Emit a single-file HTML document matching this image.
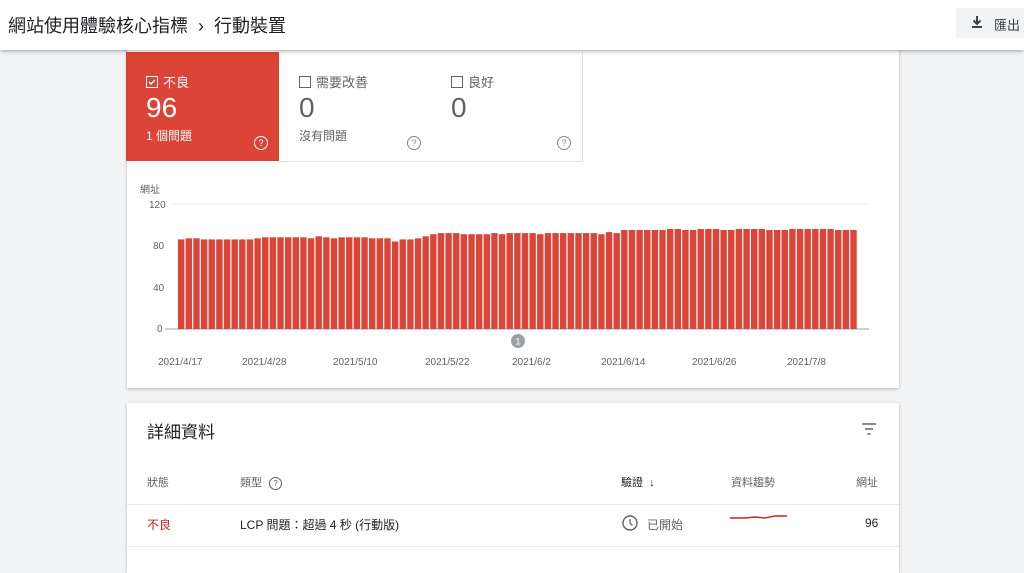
<!DOCTYPE html>
<html><head><meta charset="utf-8">
<style>
body{margin:0;width:1024px;height:567px;overflow:hidden;background:#f1f3f4;font-family:"Liberation Sans","Noto Sans CJK TC",sans-serif;position:relative}
.top{position:absolute;left:0;top:0;width:1024px;height:50px;background:#fff;box-shadow:0 1px 4px rgba(0,0,0,.35);z-index:2}
.top .t{position:absolute;left:8px;top:12px;font-size:18px;color:#202124}
.exp{position:absolute;left:956px;top:8px;width:68px;height:30px;background:#f1f3f4;font-size:14px;color:#3c4043}
.card{position:absolute;background:#fff;box-shadow:0 1px 3px rgba(0,0,0,.25)}
.tile{position:absolute;top:52px;height:109px;width:153px;border-right:1px solid #e0e0e0;border-bottom:1px solid #e0e0e0;background:#fff}
.tile .l{position:absolute;left:20px;top:20px;font-size:13px;color:#5f6368}
.tile .n{position:absolute;left:20px;top:40px;font-size:28px;color:#5f6368}
.tile .s{position:absolute;left:20px;top:75px;font-size:12px;color:#5f6368}
.cb{display:inline-block;width:10px;height:10px;border:1px solid #5f6368;vertical-align:-1px;margin-right:5px}
.q{position:absolute;right:11px;top:84px;width:12px;height:12px;border:1px solid #80868b;border-radius:50%;font-size:9px;line-height:12px;text-align:center;color:#80868b}
.ax{font-size:10px;fill:#5f6368}
.hd{position:absolute;font-size:11px;color:#5f6368}
</style></head><body>
<div class="top"><div class="t">網站使用體驗核心指標 &nbsp;›&nbsp; 行動裝置</div>
<div class="exp"><svg style="position:absolute;left:14px;top:7px" width="14" height="14" viewBox="0 0 14 14"><path d="M7 1v8M3.5 5.5L7 9l3.5-3.5" stroke="#3c4043" stroke-width="2" fill="none"/><rect x="2" y="11" width="10" height="2" fill="#3c4043"/></svg><span style="position:absolute;left:38px;top:7px;font-size:13px">匯出</span></div></div>
<div class="card" style="left:127px;top:40px;width:772px;height:348px"></div>
<div class="tile" style="left:126px;width:153px;background:#db4437;border:none">
<div class="l" style="color:#fff"><span class="cb" style="border-color:#fff;position:relative"><svg style="position:absolute;left:0;top:0" width="10" height="10"><path d="M2 5l2 2 4-4" stroke="#fff" stroke-width="1.3" fill="none"/></svg></span>不良</div>
<div class="n" style="color:#fff">96</div><div class="s" style="color:#fff">1 個問題</div><div class="q" style="border-color:#fff;color:#fff">?</div></div>
<div class="tile" style="left:279px"><div class="l"><span class="cb"></span>需要改善</div><div class="n">0</div><div class="s">沒有問題</div><div class="q">?</div></div>
<div class="tile" style="left:431px;width:151px"><div class="l"><span class="cb"></span>良好</div><div class="n">0</div><div class="q">?</div></div>
<svg style="position:absolute;left:127px;top:180px" width="772" height="200" id="ch">
<text x="13" y="13" class="ax">網址</text>
<line x1="43" y1="24" x2="742" y2="24" stroke="#eee"/>
<text x="22" y="28" class="ax">120</text><text x="26" y="69" class="ax">80</text><text x="26" y="111" class="ax">40</text><text x="30" y="152" class="ax">0</text>
<line x1="38" y1="149" x2="742" y2="149" stroke="#9aa0a6"/>
<g id="bars"></g>
<circle cx="391" cy="161" r="7" fill="#9aa0a6"/><text x="391" y="164.5" font-size="9" fill="#fff" text-anchor="middle">1</text>
<text x="31" y="185" class="ax">2021/4/17</text><text x="115" y="185" class="ax">2021/4/28</text><text x="206" y="185" class="ax">2021/5/10</text><text x="298" y="185" class="ax">2021/5/22</text><text x="385" y="185" class="ax">2021/6/2</text><text x="474" y="185" class="ax">2021/6/14</text><text x="565" y="185" class="ax">2021/6/26</text><text x="660" y="185" class="ax">2021/7/8</text>
</svg>
<script>
var v=[86,87,87,86,86,86,86,86,86,86,87,88,88,88,88,88,88,87,89,88,87,88,88,88,88,87,87,87,84,86,86,87,89,91,92,92,92,91,91,91,91,92,91,92,92,92,92,91,92,92,92,92,92,92,92,91,93,92,95,95,95,95,95,95,96,96,95,95,96,96,96,95,95,96,96,96,96,95,95,95,96,96,96,96,96,96,95,95,95];
var s='';for(var i=0;i<v.length;i++){var h=v[i]*1.042;s+='<rect x="'+(51+i*7.64).toFixed(2)+'" y="'+(149-h).toFixed(1)+'" width="6.4" height="'+h.toFixed(1)+'" fill="#db4437"/>';}
document.getElementById('bars').innerHTML=s;
</script>
<div class="card" style="left:127px;top:403px;width:772px;height:170px">
<div style="position:absolute;left:20px;top:15px;font-size:17px;color:#202124">詳細資料</div>
<svg style="position:absolute;left:735px;top:20px" width="14" height="12"><path d="M0 1h14M3 6h8M5.5 11h3" stroke="#5f6368" stroke-width="1.6"/></svg>
<div class="hd" style="left:20px;top:71px">狀態</div>
<div class="hd" style="left:113px;top:71px">類型 <span style="display:inline-block;width:11px;height:11px;border:1px solid #5f6368;border-radius:50%;font-size:8px;line-height:11px;text-align:center;margin-left:4px">?</span></div>
<div class="hd" style="left:494px;top:71px;color:#202124">驗證 &nbsp;↓</div>
<div class="hd" style="left:604px;top:71px">資料趨勢</div>
<div class="hd" style="left:729px;top:71px">網址</div>
<div style="position:absolute;left:0;top:101px;width:772px;border-top:1px solid #e8eaed"></div>
<div class="hd" style="left:20px;top:113px;font-size:12px;color:#c5221f">不良</div>
<div class="hd" style="left:113px;top:113px;font-size:12px;color:#202124">LCP 問題：超過 4 秒 (行動版)</div>
<svg style="position:absolute;left:495px;top:112px" width="16" height="16"><circle cx="8" cy="8" r="7" stroke="#5f6368" stroke-width="1.4" fill="none"/><path d="M8 4v4l2.5 2.5" stroke="#5f6368" stroke-width="1.3" fill="none"/></svg>
<div class="hd" style="left:520px;top:113px;font-size:12px">已開始</div>
<svg style="position:absolute;left:603px;top:111px" width="58" height="6"><path d="M0 4L15 4 25 3 35 4 45 2 57 2" stroke="#c5221f" stroke-width="1.4" fill="none"/></svg>
<div class="hd" style="left:738px;top:113px;font-size:12px;color:#202124">96</div>
<div style="position:absolute;left:0;top:143px;width:772px;border-top:1px solid #e8eaed"></div>
</div>
</body></html>
